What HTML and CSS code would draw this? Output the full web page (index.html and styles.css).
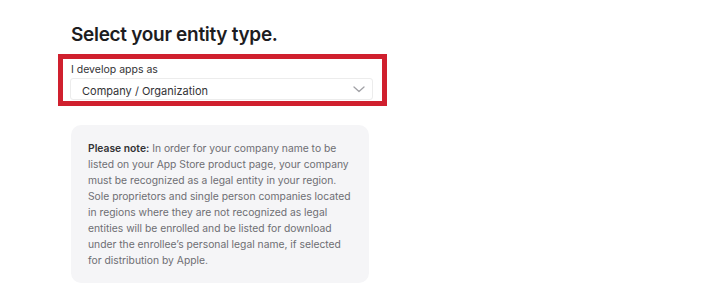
FILE: index.html
```html
<!DOCTYPE html>
<html lang="en">
<head>
    <meta charset="UTF-8">
    <meta name="viewport" content="width=device-width, initial-scale=1.0">
    <title>Select your entity type</title>
    <link rel="stylesheet" href="styles.css">
</head>
<body>
    <div class="page">
        <h1 class="title">Select your entity type.</h1>

        <div class="highlight">
            <label class="field-label" for="entity">I develop apps as</label>
            <div class="select-wrap">
                <select id="entity" class="select">
                    <option>Company / Organization</option>
                    <option>Individual / Sole Proprietor</option>
                </select>
                <svg class="chevron" width="12" height="7" viewBox="0 0 12 7">
                    <path d="M1 1l5 4.5L11 1" fill="none" stroke="#a1a1a6" stroke-width="1.3" stroke-linecap="round" stroke-linejoin="round"/>
                </svg>
            </div>
        </div>

        <div class="note">
            <p><strong>Please note:</strong> In order for your company name to be listed on your App Store product page, your company must be recognized as a legal entity in your region. Sole proprietors and single person companies located in regions where they are not recognized as legal entities will be enrolled and be listed for download under the enrollee’s personal legal name, if selected for distribution by Apple.</p>
        </div>
    </div>
</body>
</html>
```

FILE: styles.css
```css
* {
    margin: 0;
    padding: 0;
    box-sizing: border-box;
}

body {
    font-family: 'Inter', 'Liberation Sans', sans-serif;
    background: #ffffff;
    color: #1d1d1f;
}

.page {
    padding: 23px 0 0 58px;
    width: 390px;
}

.title {
    font-size: 19px;
    font-weight: 600;
    letter-spacing: -0.3px;
    line-height: 23px;
    margin-left: 13px;
    margin-bottom: 8px;
}

.highlight {
    border: 5px solid #d0202e;
    width: 329px;
    padding: 4px 9px 1px 7px;
}

.field-label {
    display: block;
    font-size: 10.5px;
    line-height: 13px;
    color: #333336;
    margin-left: 1px;
    margin-bottom: 2px;
}

.select-wrap {
    position: relative;
    border: 1px solid #ececec;
    border-radius: 3px;
    height: 22px;
}

.select {
    appearance: none;
    -webkit-appearance: none;
    border: none;
    background: transparent;
    width: 100%;
    height: 100%;
    padding-left: 11px;
    font-family: inherit;
    font-size: 11px;
    color: #333336;
    outline: none;
}

.chevron {
    position: absolute;
    right: 7px;
    top: 7px;
}

.note {
    margin: 19px 0 0 13px;
    width: 298px;
    background: #f5f5f7;
    border-radius: 10px;
    padding: 15px 17px 15px 17px;
}

.note p {
    font-size: 10.3px;
    line-height: 16px;
    color: #6e6e73;
}

.note strong {
    color: #333336;
    font-weight: 600;
}
```
